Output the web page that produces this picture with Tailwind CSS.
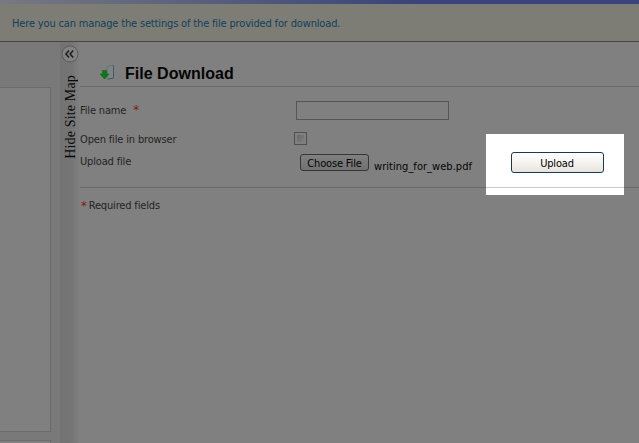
<!DOCTYPE html>
<html lang="en">
<head>
<meta charset="utf-8">
<title>File Download</title>
<script src="https://cdn.jsdelivr.net/npm/@tailwindcss/browser@4"></script>
</head>
<body class="w-[639px] h-[443px] overflow-hidden bg-[#808080] font-['DejaVu_Sans_Condensed','DejaVu_Sans',sans-serif] text-[11px] leading-[14px] tracking-[-0.16px] text-[#242424]">
<div class="relative flex h-[443px] w-[639px] flex-col overflow-hidden">
  <div class="h-1 shrink-0 bg-linear-to-r from-[#777982] via-[#50597a] via-40% to-[#39447a] to-65%"></div>
  <header class="flex h-[38px] shrink-0 items-center border-b border-[#444] bg-[#7d7d75] pt-[2px] pl-3 text-[#113f5c]">
    <p class="whitespace-nowrap">Here you can manage the settings of the file provided for download.</p>
  </header>
  <div class="flex flex-1">
    <aside class="flex w-[60px] shrink-0 flex-col bg-[#797979] pt-[45px]">
      <div class="h-[345px] w-[51px] border-t border-r border-b border-[#6b6b6b] bg-[#808080]"></div>
      <div class="mt-2 h-4 w-[51px] border-t border-r border-[#6b6b6b] bg-[#808080]"></div>
    </aside>
    <nav class="flex w-5 shrink-0 flex-col items-center bg-linear-to-r from-[#737373] via-[#747474] via-55% to-[#808080] pt-[3px]">
      <svg class="h-[18px] w-[18px] shrink-0" viewBox="0 0 18 18" fill="none">
        <circle cx="9" cy="9" r="8" fill="#828282" stroke="#5c5c5c"/>
        <path d="M8 5.5L4.9 9l3.1 3.5M12.2 5.5L9.1 9l3.1 3.5" stroke="#1c1c1c" stroke-width="1.5"/>
      </svg>
      <span class="mt-3 ml-[2px] rotate-180 whitespace-nowrap font-['Liberation_Serif',serif] text-[14px] leading-5 tracking-[0.16px] text-[#080808] [writing-mode:vertical-rl]">Hide Site Map</span>
    </nav>
    <main class="flex flex-1 flex-col">
      <div class="flex h-[45px] items-end border-b border-[#6a6a6a] pb-[2px] pl-5">
        <svg class="mb-[4px] h-4 w-4" viewBox="0 0 16 16">
          <path d="M7 2.5L13.5 1v13L7 15z" fill="#7b8587" stroke="#626f78" stroke-width=".7"/>
          <path d="M13.5 1v13L8 15.2" fill="none" stroke="#465b63" stroke-width="1"/>
          <path d="M2.6 6.5h4V10H9l-4.4 5L0 10h2.6z" fill="#087a10" stroke="#155f17" stroke-width=".6"/>
        </svg>
        <h1 class="ml-[9px] whitespace-nowrap font-['Liberation_Sans',Arial,sans-serif] text-[16px] leading-5 font-bold tracking-[0.02px] text-[#050505]">File Download</h1>
      </div>
      <form class="grid h-[101px] grid-cols-[214px_1fr] grid-rows-[47px_16px_37px] border-b border-[#6a6a6a]">
        <label class="self-center whitespace-nowrap">File name<span class="ml-[7px] text-[13px] leading-none text-[#7d1822]">*</span></label>
        <div class="flex items-center pl-[2px]"><div class="h-[19px] w-[153px] border border-[#555] bg-[#808080]"></div></div>
        <label class="self-end whitespace-nowrap pb-[3px]">Open file in browser</label>
        <div class="flex items-end pb-[5px]"><div class="h-[13px] w-[13px] border border-[#505050] bg-[#808080] p-[2px]"><div class="h-full w-full bg-linear-to-br from-[#6a6a6a] to-[#7d7d7d]"></div></div></div>
        <label class="pt-[5px] whitespace-nowrap">Upload file</label>
        <div class="flex items-start pt-[4px] pl-[6px] text-[#050505]">
          <div class="flex h-[17px] w-[69px] items-center justify-center rounded-[3px] border border-[#363636] bg-linear-to-b from-[#808080] to-[#717171] pt-[2px] whitespace-nowrap">Choose File</div>
          <span class="mt-[6px] ml-[5px] whitespace-nowrap tracking-[0.04px]">writing_for_web.pdf</span>
        </div>
      </form>
      <p class="flex pt-[11px] pl-px whitespace-nowrap"><span class="mr-[2px] text-[13px] text-[#7d1822]">*</span>Required fields</p>
    </main>
  </div>
  <section class="absolute top-[134px] left-[486px] flex h-[61px] w-[138px] flex-col bg-white">
    <div class="flex h-[54px] justify-center border-b border-[#ccc] pt-[18px] pl-[5px]">
      <button class="h-[21px] w-[93px] rounded-[3px] border border-[#173954] bg-linear-to-b from-white via-[#f5f4ef] to-[#e6e4dc] pt-[2px] pr-px text-[11px] leading-[14px] text-black">Upload</button>
    </div>
  </section>
</div>
</body>
</html>
